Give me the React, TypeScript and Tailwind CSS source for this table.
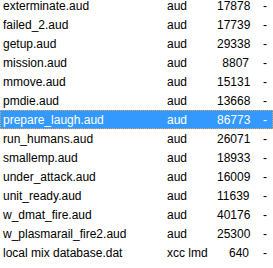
const rows: [string, string, string][] = [
  ["exterminate.aud", "aud", "17878"],
  ["failed_2.aud", "aud", "17739"],
  ["getup.aud", "aud", "29338"],
  ["mission.aud", "aud", "8807"],
  ["mmove.aud", "aud", "15131"],
  ["pmdie.aud", "aud", "13668"],
  ["prepare_laugh.aud", "aud", "86773"],
  ["run_humans.aud", "aud", "26071"],
  ["smallemp.aud", "aud", "18933"],
  ["under_attack.aud", "aud", "16009"],
  ["unit_ready.aud", "aud", "11639"],
  ["w_dmat_fire.aud", "aud", "40176"],
  ["w_plasmarail_fire2.aud", "aud", "25300"],
  ["local mix database.dat", "xcc lmd", "640"],
];

const SELECTED = 6;

export default function App() {
  return (
    <div className="w-[273px] h-[268px] overflow-hidden bg-white text-[12px] text-black font-['Liberation_Sans',Arial,sans-serif]">
      <div className="-mt-1 flex flex-col">
        {rows.map(([name, type, size], i) => (
          <div
            key={name}
            className={
              "flex h-[19px] items-center pl-[3px] whitespace-nowrap " +
              (i === SELECTED ? "bg-[#3399ff] text-white outline outline-1 outline-dotted outline-[#e0a060] -outline-offset-1" : "")
            }
          >
            <span className="w-[164px]">{name}</span>
            <span className="w-[50px]">{type}</span>
            <span className="w-[32px] text-right">{size}</span>
            <span className="ml-[14px]">-</span>
          </div>
        ))}
      </div>
    </div>
  );
}
